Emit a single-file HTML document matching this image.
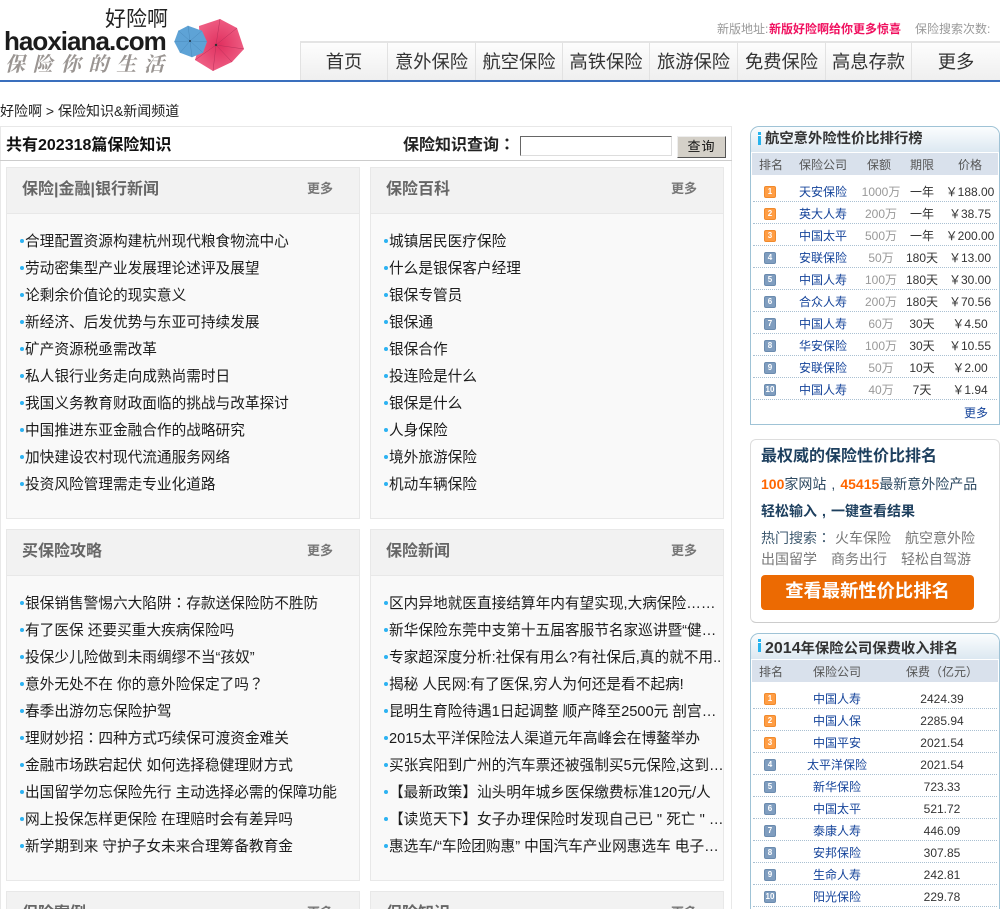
<!DOCTYPE html>
<html><head><meta charset="utf-8"><title>保险知识</title>
<style>
html,body{margin:0;padding:0;background:#fff;width:1000px;height:909px;overflow:hidden}
#w{position:absolute;left:0;top:0;width:1000px;height:909px;overflow:hidden;font-family:"Liberation Sans","WenQuanYi Zen Hei","Noto Sans CJK SC",sans-serif;color:#333}
div,span{position:absolute;white-space:nowrap;box-sizing:border-box}
font{font-family:"Noto Sans CJK TC",sans-serif;line-height:0}
em{display:inline-block;width:14px;text-align:center;font-style:normal;line-height:0}
.nav{top:41px;height:39px;line-height:37px;border-top:2px solid #e4e4e4;border-left:1px solid #e2e2e2;background:linear-gradient(#fdfdfd,#efefef);font-size:18.3px;text-align:center;color:#333}
.pan{width:354px;height:352px;background:#f9f9f9;border:1px solid #e8e8e8}
.ph{left:0;top:0;width:352px;height:46px;background:#f2f2f2;border-bottom:1px solid #e8e8e8}
.pt{left:15px;top:0;line-height:43px;font-size:16px;font-weight:bold;color:#666}
.pm{left:300px;top:0;line-height:41px;font-size:13px;font-weight:bold;color:#777}
.li{left:13px;margin-top:2px;height:27px;padding-left:5px;line-height:27px;font-size:14.67px;color:#1c1c1c}
.li:before{content:"";position:absolute;left:0;top:10px;width:4px;height:4px;border-radius:50%;background:#2cb2f2}
.box{background:#fff;border:1px solid #9fc3d6;left:750px;width:250px}
.bh{left:0;top:0;width:248px;background:linear-gradient(#fbfdfe,#dce8f1);border-radius:9px 9px 0 0;font-size:14.33px;font-weight:bold;color:#333;padding-left:14px}
.bh:before{content:"";position:absolute;left:7px;top:5px;width:3px;height:13px;background:linear-gradient(#27b4ee 0 3px,#fff 3px 4px,#27b4ee 4px)}
.th{left:1px;width:246px;top:26px;height:22px;line-height:24px;background:#d9e1ec;font-size:12px;color:#555}
.r{left:753px;width:244px;height:22px;line-height:24px;font-size:12px;border-bottom:1px dotted #a9c0d2}
.r span{top:0;text-align:center}
.r .i{left:11px;top:6px;width:12px;height:12px;line-height:10px;background:#7f9dbf;border:1px solid #6b8bae;border-radius:2px;color:#fff;font-size:8px;font-weight:bold}
.r .o{background:#ff9d44;border-color:#f08a2c}
.c{color:#14439a;left:30px;width:80px}
.a{color:#999;left:108px;width:40px}
.q{color:#333;left:150px;width:38px}
.p{color:#333;left:187px;width:60px}
.c2{color:#14439a;left:44px;width:80px}
.f{color:#333;left:149px;width:80px}
.th span{top:0;text-align:center}
.cut{height:18px;border-bottom:0;overflow:hidden}
</style></head><body><div id="w">

<!-- logo -->
<div style="left:104px;top:7px;width:64px;text-align:right;font-size:21px;line-height:25px;color:#222">好险啊</div>
<div style="left:4px;top:26px;font-size:26px;line-height:31px;font-weight:bold;letter-spacing:-.97px;color:#1c1c1c">haoxiana.com</div>
<div style="left:5px;top:53px;font-family:'Liberation Serif','Noto Serif CJK SC',serif;font-size:20px;line-height:25px;letter-spacing:7.8px;color:#9a9592;font-style:italic;font-weight:bold">保险你的生活</div>
<svg style="position:absolute;left:170px;top:15px" width="80" height="62" viewBox="170 15 80 62">
<defs><radialGradient id="rg"><stop offset="0" stop-color="#e0305f"/><stop offset="1" stop-color="#ee5c82"/></radialGradient></defs>
<polygon points="220,19 237,28 244,49 232,62 213,71 195,60 200,43 199,26" fill="url(#rg)"/>
<g stroke="#b9305a" stroke-width=".5"><line x1="216" y1="45" x2="220" y2="19"/><line x1="216" y1="45" x2="237" y2="28"/><line x1="216" y1="45" x2="244" y2="49"/><line x1="216" y1="45" x2="232" y2="62"/><line x1="216" y1="45" x2="213" y2="71"/><line x1="216" y1="45" x2="195" y2="60"/></g>
<circle cx="216" cy="45" r="1.2" fill="#333"/>
<polygon points="188,25.7 202,30.7 207,41.7 203,52.7 192,57.3 180,52.7 174.3,41.7 178.3,30.7" fill="#5ea3d6"/>
<g stroke="#4a8abc" stroke-width=".5"><line x1="190" y1="41" x2="188" y2="25.7"/><line x1="190" y1="41" x2="207" y2="41.7"/><line x1="190" y1="41" x2="192" y2="57.3"/><line x1="190" y1="41" x2="174.3" y2="41.7"/><line x1="190" y1="41" x2="202" y2="30.7"/><line x1="190" y1="41" x2="178.3" y2="30.7"/><line x1="190" y1="41" x2="203" y2="52.7"/><line x1="190" y1="41" x2="180" y2="52.7"/></g>
<circle cx="190" cy="41" r="1" fill="#234"/>
</svg>

<!-- top text -->
<div style="left:717px;top:21px;font-size:12px;line-height:16px;color:#999">新版地址:</div>
<div style="left:769px;top:21px;font-size:12px;line-height:16px;color:#f0105f;font-weight:bold">新版好险啊给你更多惊喜</div>
<div style="left:915px;top:21px;font-size:12px;line-height:16px;color:#999">保险搜索次数:</div>

<!-- nav -->
<div class="nav" style="left:300px;width:87px">首页</div>
<div class="nav" style="left:387px;width:88px">意外保险</div>
<div class="nav" style="left:475px;width:87px">航空保险</div>
<div class="nav" style="left:562px;width:87px">高铁保险</div>
<div class="nav" style="left:649px;width:88px">旅游保险</div>
<div class="nav" style="left:737px;width:88px">免费保险</div>
<div class="nav" style="left:825px;width:86px">高息存款</div>
<div class="nav" style="left:911px;width:89px">更多</div>
<div style="left:0;top:80px;width:1000px;height:2px;background:#3a6fbd"></div>

<div style="left:0;top:103px;font-size:14px;line-height:16px;color:#222">好险啊 &gt; 保险知识&amp;新闻频道</div>

<!-- main -->
<div style="left:0;top:126px;width:732px;height:783px;border:1px solid #e8e8e8;border-bottom:0"></div>
<div style="left:0;top:160px;width:732px;height:1px;background:#ccc"></div>
<div style="left:6px;top:136px;font-size:16px;line-height:20px;font-weight:bold;color:#111">共有202318篇保险知识</div>
<div style="left:403px;top:136px;font-size:16px;line-height:20px;font-weight:bold;color:#222">保险知识查询<font>：</font></div>
<div style="left:520px;top:136px;width:152px;height:20px;background:#fff;border:1px solid;border-color:#666 #ddd #ddd #666"></div>
<div style="left:677px;top:136px;width:49px;height:22px;line-height:20px;background:#d4d0c8;border:1px solid;border-color:#eee #555 #555 #eee;font-size:13px;text-align:center;letter-spacing:1px;color:#111">查询</div>

<!-- panel 1 -->
<div class="pan" style="left:6px;top:167px"><div class="ph"><span class="pt">保险|金融|银行新闻</span><span class="pm">更多</span></div>
<div class="li" style="top:59px">合理配置资源构建杭州现代粮食物流中心</div>
<div class="li" style="top:86px">劳动密集型产业发展理论述评及展望</div>
<div class="li" style="top:113px">论剩余价值论的现实意义</div>
<div class="li" style="top:140px">新经济、后发优势与东亚可持续发展</div>
<div class="li" style="top:167px">矿产资源税亟需改革</div>
<div class="li" style="top:194px">私人银行业务走向成熟尚需时日</div>
<div class="li" style="top:221px">我国义务教育财政面临的挑战与改革探讨</div>
<div class="li" style="top:248px">中国推进东亚金融合作的战略研究</div>
<div class="li" style="top:275px">加快建设农村现代流通服务网络</div>
<div class="li" style="top:302px">投资风险管理需走专业化道路</div>
</div>

<!-- panel 2 -->
<div class="pan" style="left:370px;top:167px"><div class="ph"><span class="pt">保险百科</span><span class="pm">更多</span></div>
<div class="li" style="top:59px">城镇居民医疗保险</div>
<div class="li" style="top:86px">什么是银保客户经理</div>
<div class="li" style="top:113px">银保专管员</div>
<div class="li" style="top:140px">银保通</div>
<div class="li" style="top:167px">银保合作</div>
<div class="li" style="top:194px">投连险是什么</div>
<div class="li" style="top:221px">银保是什么</div>
<div class="li" style="top:248px">人身保险</div>
<div class="li" style="top:275px">境外旅游保险</div>
<div class="li" style="top:302px">机动车辆保险</div>
</div>

<!-- panel 3 -->
<div class="pan" style="left:6px;top:529px"><div class="ph"><span class="pt">买保险攻略</span><span class="pm">更多</span></div>
<div class="li" style="top:59px">银保销售警惕六大陷阱<font>：</font>存款送保险防不胜防</div>
<div class="li" style="top:86px">有了医保 还要买重大疾病保险吗</div>
<div class="li" style="top:113px">投保少儿险做到未雨绸缪不当“孩奴”</div>
<div class="li" style="top:140px">意外无处不在 你的意外险保定了吗<font>？</font></div>
<div class="li" style="top:167px">春季出游勿忘保险护驾</div>
<div class="li" style="top:194px">理财妙招<font>：</font>四种方式巧续保可渡资金难关</div>
<div class="li" style="top:221px">金融市场跌宕起伏 如何选择稳健理财方式</div>
<div class="li" style="top:248px">出国留学勿忘保险先行 主动选择必需的保障功能</div>
<div class="li" style="top:275px">网上投保怎样更保险 在理赔时会有差异吗</div>
<div class="li" style="top:302px">新学期到来 守护子女未来合理筹备教育金</div>
</div>

<!-- panel 4 -->
<div class="pan" style="left:370px;top:529px"><div class="ph"><span class="pt">保险新闻</span><span class="pm">更多</span></div>
<div class="li" style="top:59px">区内异地就医直接结算年内有望实现,大病保险……</div>
<div class="li" style="top:86px">新华保险东莞中支第十五届客服节名家巡讲暨“健…</div>
<div class="li" style="top:113px">专家超深度分析:社保有用么?有社保后,真的就不用..</div>
<div class="li" style="top:140px">揭秘 人民网:有了医保,穷人为何还是看不起病!</div>
<div class="li" style="top:167px">昆明生育险待遇1日起调整 顺产降至2500元 剖宫…</div>
<div class="li" style="top:194px">2015太平洋保险法人渠道元年高峰会在博鳌举办</div>
<div class="li" style="top:221px">买张宾阳到广州的汽车票还被强制买5元保险,这到…</div>
<div class="li" style="top:248px"><font>【</font>最新政策<font>】</font>汕头明年城乡医保缴费标准120元/人</div>
<div class="li" style="top:275px"><font>【</font>读览天下<font>】</font>女子办理保险时发现自己已 " 死亡 " …</div>
<div class="li" style="top:302px">惠选车/“车险团购惠” 中国汽车产业网惠选车 电子…</div>
</div>

<!-- panel 5,6 -->
<div class="pan cut" style="left:6px;top:891px"><div class="ph"><span class="pt">保险案例</span><span class="pm">更多</span></div></div>
<div class="pan cut" style="left:370px;top:891px"><div class="ph"><span class="pt">保险知识</span><span class="pm">更多</span></div></div>

<!-- rank box 1 -->
<div class="box" style="top:126px;height:299px;border-radius:9px 9px 0 0">
<div class="bh" style="height:25px;line-height:25px">航空意外险性价比排行榜</div>
<div class="th"><span style="left:1px;width:36px">排名</span><span style="left:31px;width:80px">保险公司</span><span style="left:107px;width:40px">保额</span><span style="left:151px;width:38px">期限</span><span style="left:188px;width:60px">价格</span></div>
</div>
<div class="r" style="top:180px"><span class="i o">1</span><span class="c">天安保险</span><span class="a">1000万</span><span class="q">一年</span><span class="p">￥188.00</span></div>
<div class="r" style="top:202px"><span class="i o">2</span><span class="c">英大人寿</span><span class="a">200万</span><span class="q">一年</span><span class="p">￥38.75</span></div>
<div class="r" style="top:224px"><span class="i o">3</span><span class="c">中国太平</span><span class="a">500万</span><span class="q">一年</span><span class="p">￥200.00</span></div>
<div class="r" style="top:246px"><span class="i">4</span><span class="c">安联保险</span><span class="a">50万</span><span class="q">180天</span><span class="p">￥13.00</span></div>
<div class="r" style="top:268px"><span class="i">5</span><span class="c">中国人寿</span><span class="a">100万</span><span class="q">180天</span><span class="p">￥30.00</span></div>
<div class="r" style="top:290px"><span class="i">6</span><span class="c">合众人寿</span><span class="a">200万</span><span class="q">180天</span><span class="p">￥70.56</span></div>
<div class="r" style="top:312px"><span class="i">7</span><span class="c">中国人寿</span><span class="a">60万</span><span class="q">30天</span><span class="p">￥4.50</span></div>
<div class="r" style="top:334px"><span class="i">8</span><span class="c">华安保险</span><span class="a">100万</span><span class="q">30天</span><span class="p">￥10.55</span></div>
<div class="r" style="top:356px"><span class="i">9</span><span class="c">安联保险</span><span class="a">50万</span><span class="q">10天</span><span class="p">￥2.00</span></div>
<div class="r" style="top:378px"><span class="i">10</span><span class="c">中国人寿</span><span class="a">40万</span><span class="q">7天</span><span class="p">￥1.94</span></div>
<div style="left:964px;top:405px;font-size:12px;line-height:16px;color:#14439a">更多</div>

<!-- promo -->
<div style="left:750px;top:439px;width:250px;height:184px;border:1px solid #ddd;border-bottom-color:#ccc;border-radius:6px;background:#fff"></div>
<div style="left:761px;top:447px;font-size:16px;line-height:20px;font-weight:bold;color:#1d3f5e">最权威的保险性价比排名</div>
<div style="left:761px;top:476px;font-size:14px;line-height:16px;color:#2e4a62"><b style="color:#f60">100</b>家网站<em>,</em><b style="color:#f60">45415</b>最新意外险产品</div>
<div style="left:761px;top:503px;font-size:14px;line-height:16px;font-weight:bold;color:#1d3f5e">轻松输入<em>,</em>一键查看结果</div>
<div style="left:761px;top:530px;font-size:14px;line-height:16px;color:#777"><b style="font-weight:normal;color:#3f5a70">热门搜索<font>：</font></b><b style="font-weight:normal;margin-left:4px">火车保险</b><b style="font-weight:normal;margin-left:14px">航空意外险</b></div>
<div style="left:761px;top:551px;font-size:14px;line-height:16px;color:#777">出国留学<b style="font-weight:normal;margin-left:14px">商务出行</b><b style="font-weight:normal;margin-left:14px">轻松自驾游</b></div>
<div style="left:761px;top:575px;width:213px;height:35px;line-height:31px;background:#ec6a02;border-radius:4px;color:#fff;font-size:18.3px;font-weight:bold;text-align:center">查看最新性价比排名</div>

<!-- rank box 2 -->
<div class="box" style="top:633px;height:276px;border-bottom:0;border-radius:9px 9px 0 0">
<div class="bh" style="height:25px;line-height:29px"><b style="font-size:16px">2014</b>年保险公司保费收入排名</div>
<div class="th"><span style="left:1px;width:36px">排名</span><span style="left:45px;width:80px">保险公司</span><span style="left:140px;width:100px">保费<font>（</font>亿元<font>）</font></span></div>
</div>
<div class="r" style="top:687px"><span class="i o">1</span><span class="c2">中国人寿</span><span class="f">2424.39</span></div>
<div class="r" style="top:709px"><span class="i o">2</span><span class="c2">中国人保</span><span class="f">2285.94</span></div>
<div class="r" style="top:731px"><span class="i o">3</span><span class="c2">中国平安</span><span class="f">2021.54</span></div>
<div class="r" style="top:753px"><span class="i">4</span><span class="c2">太平洋保险</span><span class="f">2021.54</span></div>
<div class="r" style="top:775px"><span class="i">5</span><span class="c2">新华保险</span><span class="f">723.33</span></div>
<div class="r" style="top:797px"><span class="i">6</span><span class="c2">中国太平</span><span class="f">521.72</span></div>
<div class="r" style="top:819px"><span class="i">7</span><span class="c2">泰康人寿</span><span class="f">446.09</span></div>
<div class="r" style="top:841px"><span class="i">8</span><span class="c2">安邦保险</span><span class="f">307.85</span></div>
<div class="r" style="top:863px"><span class="i">9</span><span class="c2">生命人寿</span><span class="f">242.81</span></div>
<div class="r" style="top:885px"><span class="i">10</span><span class="c2">阳光保险</span><span class="f">229.78</span></div>

</div></body></html>
